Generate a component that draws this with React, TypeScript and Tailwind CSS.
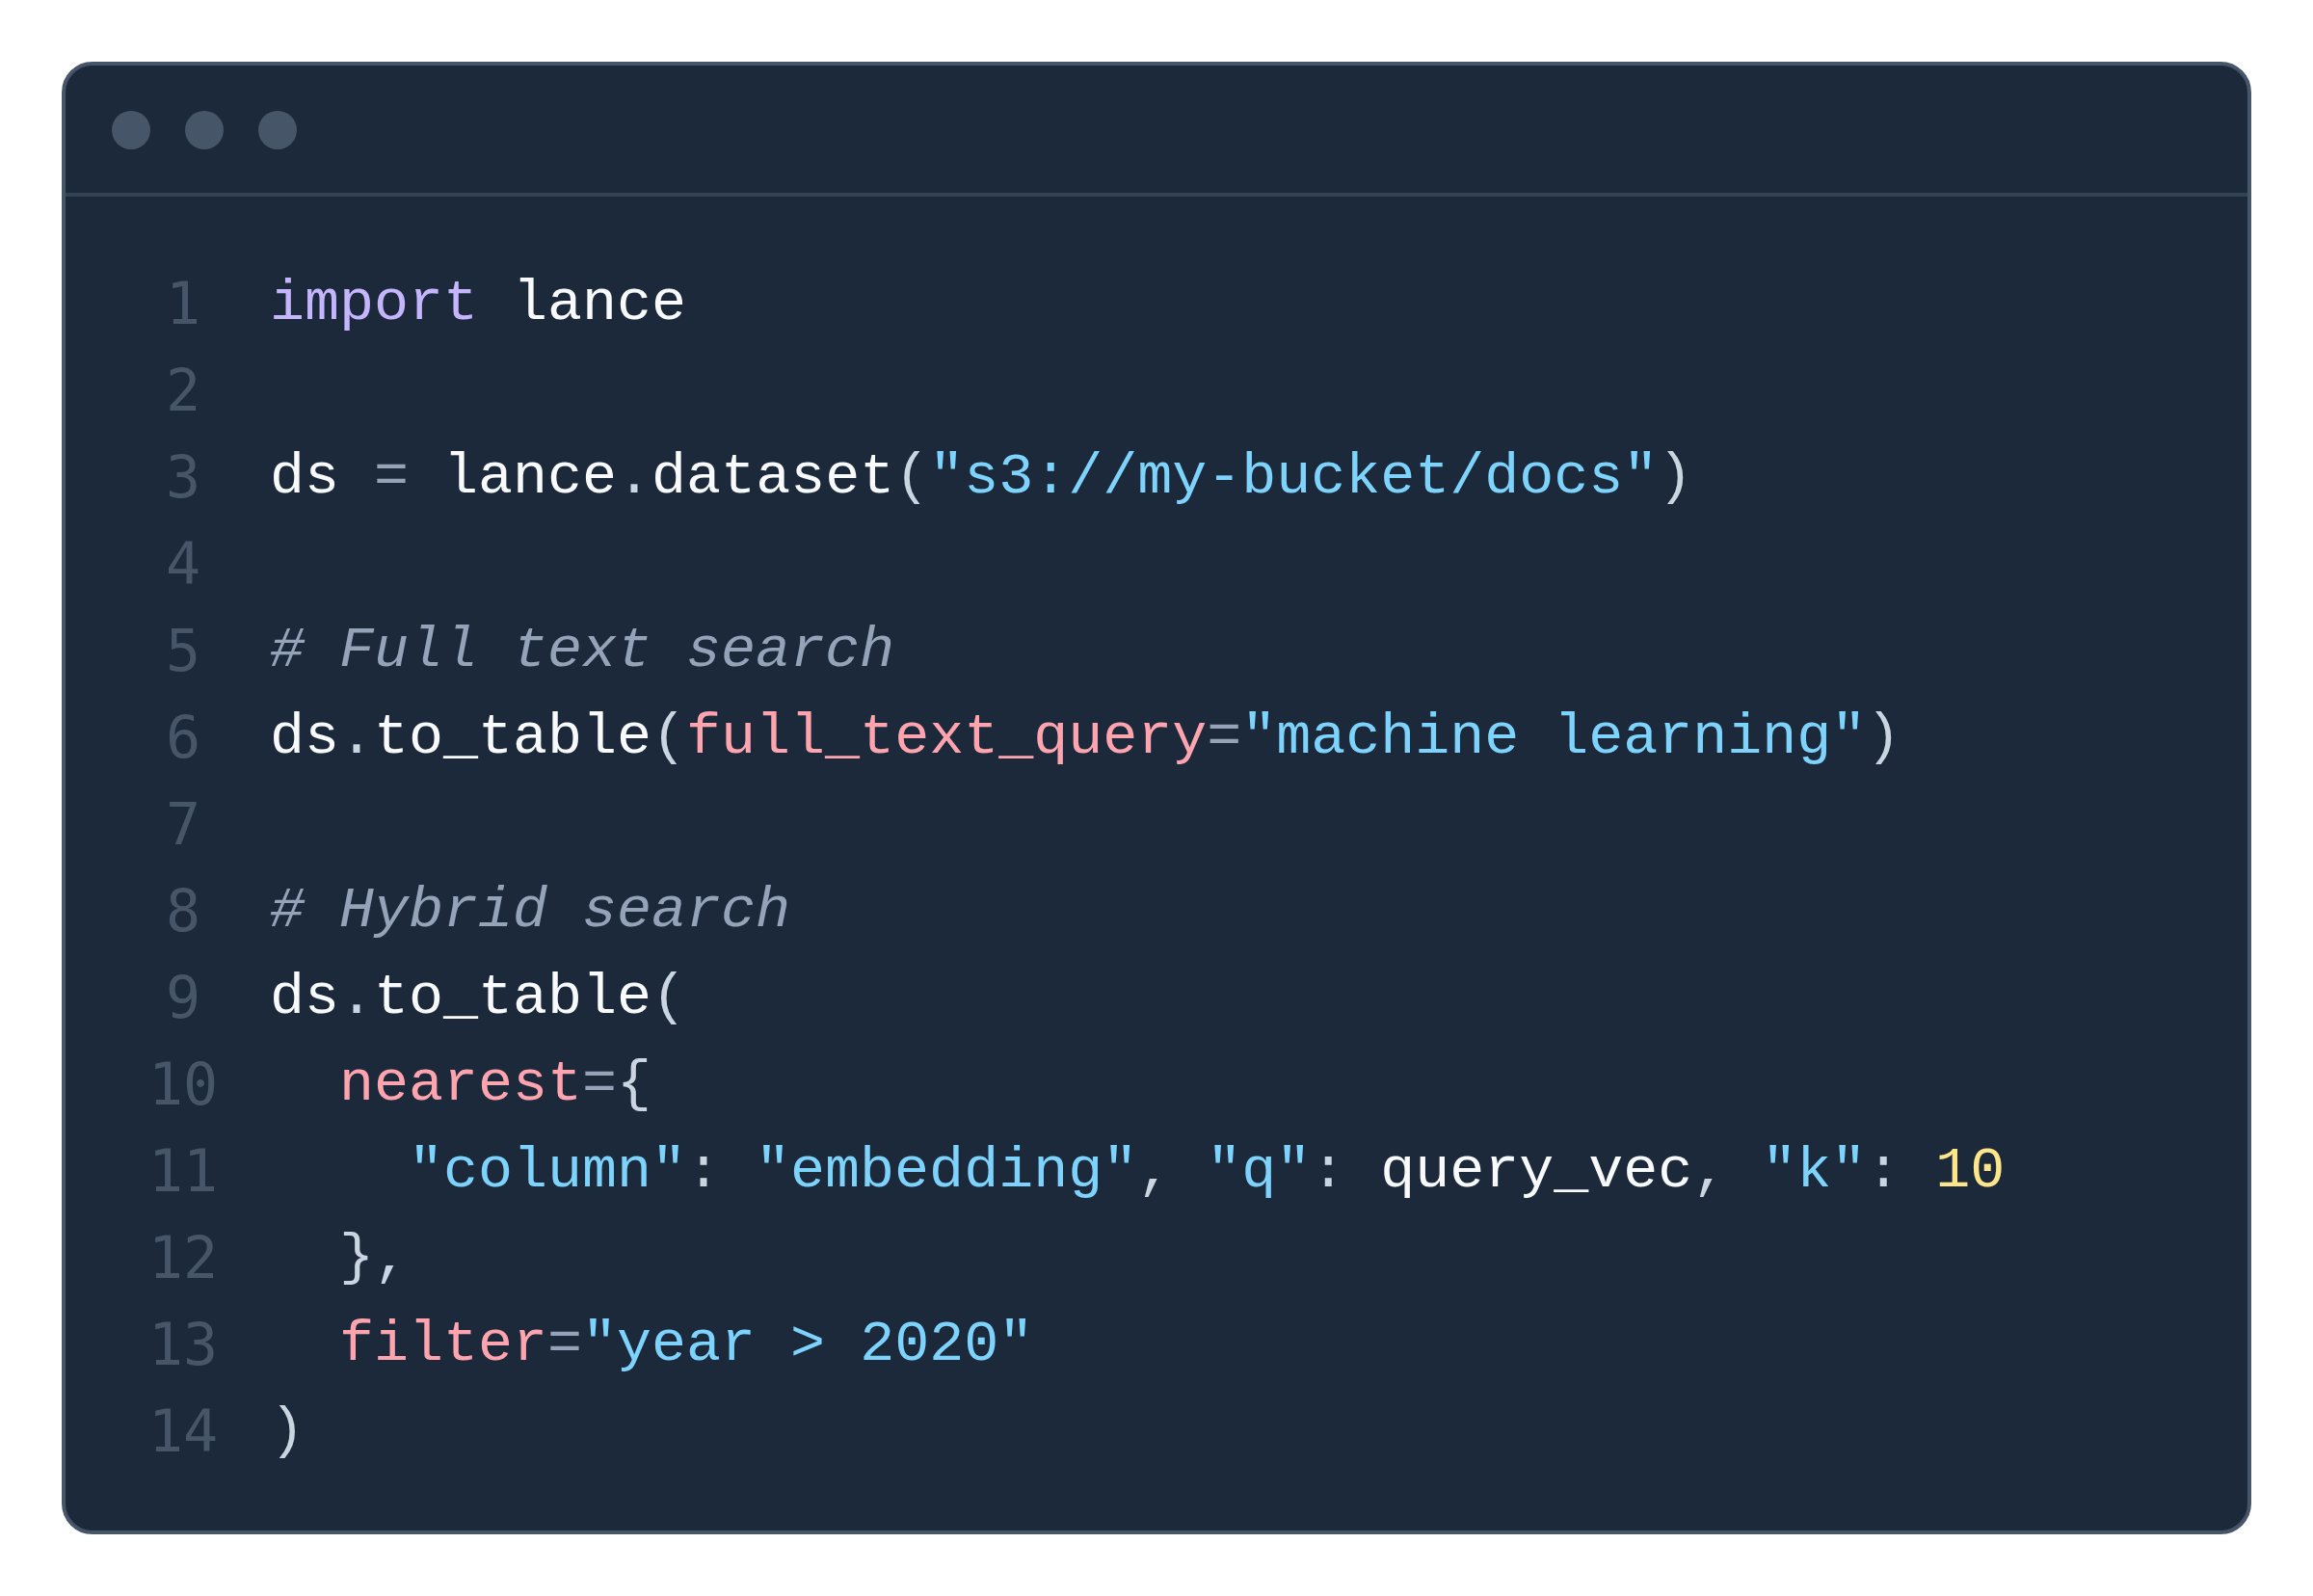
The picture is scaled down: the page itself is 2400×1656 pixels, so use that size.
import React from "react";

type Kind = "kw" | "id" | "op" | "pn" | "str" | "arg" | "num" | "cm";
type Token = [Kind, string];

const tone: Record<Kind, string> = {
  kw: "text-[#c4b5fd]",
  id: "text-[#f8fafc]",
  op: "text-[#94a3b8]",
  pn: "text-[#cbd5e1]",
  str: "text-[#7dd3fc]",
  arg: "text-[#fda4af]",
  num: "text-[#fde68a]",
  cm: "text-[#94a3b8] italic",
};

const lines: Token[][] = [
  [["kw", "import"], ["id", " lance"]],
  [],
  [
    ["id", "ds "],
    ["op", "="],
    ["id", " lance"],
    ["pn", "."],
    ["id", "dataset"],
    ["pn", "("],
    ["str", '"s3://my-bucket/docs"'],
    ["pn", ")"],
  ],
  [],
  [["cm", "# Full text search"]],
  [
    ["id", "ds"],
    ["pn", "."],
    ["id", "to_table"],
    ["pn", "("],
    ["arg", "full_text_query"],
    ["op", "="],
    ["str", '"machine learning"'],
    ["pn", ")"],
  ],
  [],
  [["cm", "# Hybrid search"]],
  [["id", "ds"], ["pn", "."], ["id", "to_table"], ["pn", "("]],
  [["id", "  "], ["arg", "nearest"], ["op", "="], ["pn", "{"]],
  [
    ["id", "    "],
    ["str", '"column"'],
    ["pn", ": "],
    ["str", '"embedding"'],
    ["pn", ", "],
    ["str", '"q"'],
    ["pn", ": "],
    ["id", "query_vec"],
    ["pn", ", "],
    ["str", '"k"'],
    ["pn", ": "],
    ["num", "10"],
  ],
  [["pn", "  },"]],
  [["id", "  "], ["arg", "filter"], ["op", "="], ["str", '"year > 2020"']],
  [["pn", ")"]],
];

export default function App() {
  return (
    <div className="min-h-screen bg-white p-16">
      <div className="overflow-hidden rounded-[32px] border-4 border-[#475569] bg-[#1c293b]">
        {/* Window chrome */}
        <div className="flex h-[136px] items-center gap-9 border-b-4 border-[#334155] pl-12 pt-[2px]">
          <span className="h-10 w-10 rounded-full bg-[#475569]" />
          <span className="h-10 w-10 rounded-full bg-[#475569]" />
          <span className="h-10 w-10 rounded-full bg-[#475569]" />
        </div>

        {/* Code */}
        <div className="pb-[58px] pl-[82px] pt-[66px] font-['DejaVu_Sans_Mono','Liberation_Mono',monospace] text-[60px] leading-[90px]">
          {lines.map((tokens, i) => (
            <div key={i} className="flex">
              <span className="w-20 shrink-0 text-center text-[#475569]">{i + 1}</span>
              <code className="ml-[50px] whitespace-pre">
                {tokens.map(([kind, text], j) => (
                  <span key={j} className={tone[kind]}>
                    {text}
                  </span>
                ))}
              </code>
            </div>
          ))}
        </div>
      </div>
    </div>
  );
}
